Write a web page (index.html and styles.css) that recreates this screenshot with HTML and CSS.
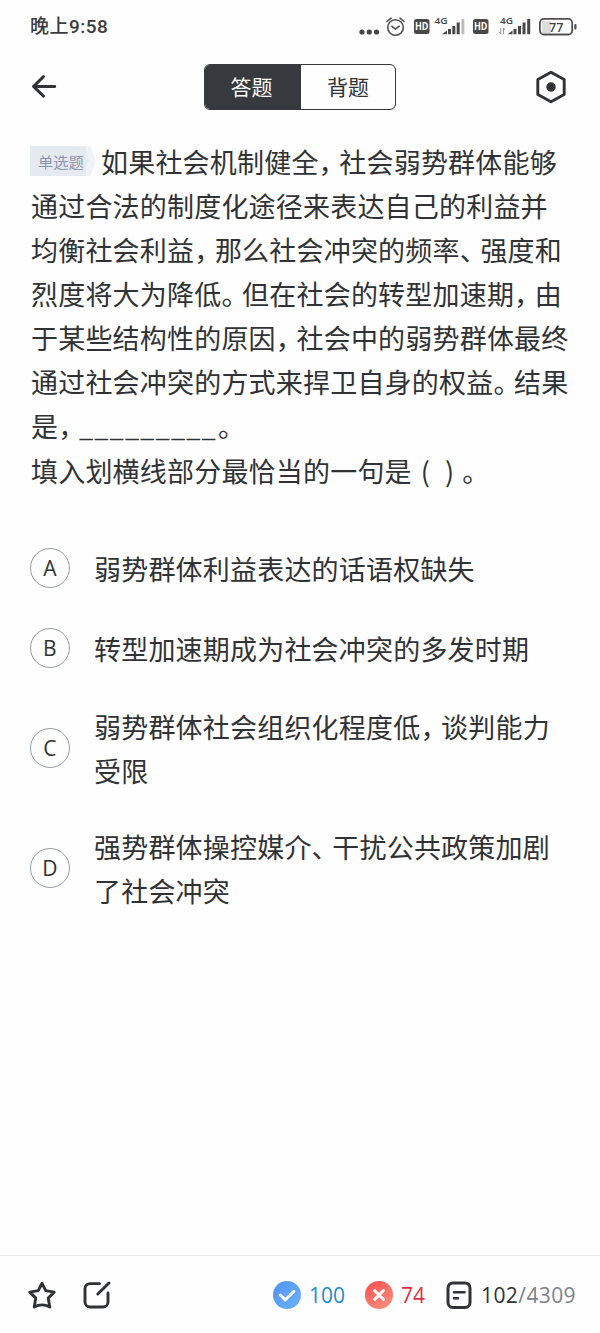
FILE: index.html
```html
<!DOCTYPE html>
<html lang="zh-CN">

<head>
    <meta charset="UTF-8">
    <meta name="viewport" content="width=device-width, initial-scale=1.0">
    <title>答题</title>
    <link rel="stylesheet" href="styles.css">
</head>

<body>
    <div class="status">
        <span class="time">晚上9:58</span>
        <svg class="status-icons" width="224" height="26" viewBox="356 14 224 26">
            <g fill="#454545">
                <circle cx="362" cy="32" r="2.6"/><circle cx="369.3" cy="32" r="2.6"/><circle cx="376.5" cy="32" r="2.6"/>
            </g>
            <g fill="none" stroke="#505050" stroke-width="1.6" stroke-linecap="round" stroke-linejoin="round">
                <circle cx="395.5" cy="27.5" r="7.8"/>
                <path d="M391.8 26.2l3.6 3 3.8-3M387 21.5l4-3.3M404 21.5l-4-3.3"/>
            </g>
            <rect x="414" y="19" width="15.5" height="15" rx="2.5" fill="#484848"/>
            <text class="hd" x="415" y="30.4" textLength="13.5" lengthAdjust="spacingAndGlyphs">HD</text>
            <text class="net" x="434.5" y="24.3" textLength="13" lengthAdjust="spacingAndGlyphs">4G</text>
            <g fill="#484848">
                <path d="M442 34.3l5-3.8v3.8zM448 29h3v5.3h-3zM452.3 26h3v8.3h-3zM456.7 22.5h3v11.8h-3z"/>
                <path fill="#bbb" d="M461.5 19h2.8v15.3h-2.8z"/>
            </g>
            <rect x="473" y="19" width="15.5" height="15" rx="2.5" fill="#484848"/>
            <text class="hd" x="474" y="30.4" textLength="13.5" lengthAdjust="spacingAndGlyphs">HD</text>
            <text class="net" x="500" y="24.3" textLength="13" lengthAdjust="spacingAndGlyphs">4G</text>
            <path d="M500.8 28v6l-1.6-2M503.5 34v-6l1.6 2" fill="none" stroke="#999" stroke-width="1"/>
            <path fill="#484848" d="M507.5 34.3l5-3.8v3.8zM513.5 29h3v5.3h-3zM518 26h3v8.3h-3zM522.5 22.5h3v11.8h-3zM527.2 19h3v15.3h-3z"/>
            <rect x="542" y="21" width="9" height="12" fill="#ddd"/>
            <rect x="539.9" y="18.9" width="32.3" height="15.6" rx="4" fill="none" stroke="#505050" stroke-width="1.8"/>
            <rect x="574.3" y="24" width="2.2" height="5.5" rx="1" fill="#505050"/>
            <text class="power" x="549" y="31.5" textLength="14.5">77</text>
        </svg>
    </div>

    <div class="nav">
        <svg width="26" height="26" viewBox="0 0 26 26" fill="none" stroke="#303235" stroke-width="2.9" stroke-linecap="round" stroke-linejoin="round">
            <path d="M23.8 12.5H2.5M12.5 2.6L2.5 12.5l10 9.6"/>
        </svg>
        <div class="tabs">
            <div class="tab active">答题</div>
            <div class="tab">背题</div>
        </div>
        <svg width="32" height="34" viewBox="0 0 32 34">
            <path d="M16 2.3l13.2 7.2v15L16 31.7 2.8 24.5v-15z" fill="none" stroke="#303235" stroke-width="2.9" stroke-linejoin="round"/>
            <circle cx="16" cy="17" r="4.7" fill="#303235"/>
        </svg>
    </div>

    <div class="question">
        <p><span class="tag">单选题</span>如果社会机制健全<i>，</i>社会弱势群体能够<br>通过合法的制度化途径来表达自己的利益并<br>均衡社会利益<i>，</i>那么社会冲突的频率<i>、</i>强度和<br>烈度将大为降低<i>。</i>但在社会的转型加速期<i>，</i>由<br>于某些结构性的原因<i>，</i>社会中的弱势群体最终<br>通过社会冲突的方式来捍卫自身的权益<i>。</i>结果<br>是<i>，</i><span class="blank">_________</span><i>。</i></p>
        <p class="ask">填入划横线部分最恰当的一句是<span class="paren">( &nbsp;)</span><i>。</i></p>
    </div>

    <div class="options">
        <div class="option"><span class="key">A</span><span>弱势群体利益表达的话语权缺失</span></div>
        <div class="option"><span class="key">B</span><span>转型加速期成为社会冲突的多发时期</span></div>
        <div class="option"><span class="key">C</span><span>弱势群体社会组织化程度低<i>，</i>谈判能力<br>受限</span></div>
        <div class="option"><span class="key">D</span><span>强势群体操控媒介<i>、</i>干扰公共政策加剧<br>了社会冲突</span></div>
    </div>

    <div class="footer">
        <svg class="star" width="28" height="28" viewBox="0 0 28 28" fill="none" stroke="#303235" stroke-width="2.9" stroke-linejoin="round">
            <path d="M14 2.2l3.7 7.4 8.5 1.5-6 6 1.6 8.9q-7.8-4.2-15.6 0L7.8 17.1l-6-6 8.5-1.5z"/>
        </svg>
        <svg class="edit" width="28" height="28" viewBox="0 0 28 28" fill="none" stroke="#303235" stroke-width="2.9" stroke-linecap="round">
            <path d="M16.5 2.6H7A5 5 0 0 0 2 7.6V21A5 5 0 0 0 7 26h13a5 5 0 0 0 5-5V12M14.8 13L26 2"/>
        </svg>
        <svg class="right" width="28" height="28" viewBox="0 0 28 28">
            <defs>
                <linearGradient id="blue" x1="0" y1="0" x2="1" y2="1"><stop stop-color="#4f93f0"/><stop offset="1" stop-color="#6db3fb"/></linearGradient>
                <linearGradient id="red" x1="0" y1="0" x2="0.6" y2="1"><stop stop-color="#f94a4e"/><stop offset="1" stop-color="#fc8b78"/></linearGradient>
            </defs>
            <circle cx="14" cy="14" r="14" fill="url(#blue)"/>
            <path d="M7.3 14l5 4.8 8.7-8.5" fill="none" stroke="#fff" stroke-width="3" stroke-linecap="round" stroke-linejoin="round"/>
        </svg>
        <span class="num blue">100</span>
        <svg class="wrong" width="28" height="28" viewBox="0 0 28 28">
            <circle cx="14" cy="14" r="14" fill="url(#red)"/>
            <path d="M9.5 9.5l9 9M18.5 9.5l-9 9" stroke="#fff" stroke-width="3" stroke-linecap="round"/>
        </svg>
        <span class="num red">74</span>
        <svg class="sheet" width="26" height="28" viewBox="0 0 26 28" fill="none" stroke="#303235" stroke-width="3" stroke-linecap="round">
            <rect x="2" y="1.9" width="22" height="24.5" rx="5"/>
            <path d="M8 11.3h10.5M8 17.3h4" stroke-width="2.6"/>
        </svg>
        <span class="num count">102<span class="total">/4309</span></span>
    </div>
</body>

</html>
```
FILE: styles.css
```css
* {
    box-sizing: border-box;
}
body {
    margin: 0;
    height: 1333px;
    display: flex;
    flex-direction: column;
    background: #fefefe;
    color: #303235;
    font-family: "Noto Sans CJK SC", sans-serif;
}
p {
    margin: 0;
}
svg {
    display: block;
    flex: none;
}
.status {
    display: flex;
    justify-content: space-between;
    align-items: center;
    height: 54px;
    padding: 0 20px 0 30px;
}
.time {
    font-family: Roboto, "Noto Sans CJK SC", sans-serif;
    font-size: 19px;
    font-weight: 500;
    letter-spacing: 0.5px;
    line-height: 24px;
    color: #3c3c3c;
}
.hd, .net, .power {
    font-family: "Open Sans", sans-serif;
    font-weight: 700;
}
.hd {
    font-size: 10.5px;
    fill: #fff;
}
.net {
    font-size: 9.5px;
    font-weight: 600;
    fill: #444;
}
.power {
    font-size: 12.5px;
    font-weight: 600;
    fill: #444;
}
.nav {
    display: flex;
    justify-content: space-between;
    align-items: center;
    height: 66px;
    padding: 0 33px 0 31px;
}
.tabs {
    display: flex;
    width: 192px;
    height: 46px;
    margin-left: 8px;
    border: 1.5px solid #36393e;
    border-radius: 6px;
    overflow: hidden;
}
.tab {
    flex: 1;
    text-align: center;
    font-size: 21px;
    line-height: 43px;
}
.active {
    flex: 0 0 96px;
    padding-right: 3px;
    background: #36393e;
    color: #fff;
}
.question {
    height: 409px;
    padding: 20px 0 0 31px;
}
.question, .options {
    font-size: 27px;
    line-height: 44px;
    letter-spacing: 0.2px;
    white-space: nowrap;
}
/* narrow punctuation */
i {
    font-style: normal;
    letter-spacing: -6.3px;
}
.ask {
    margin-top: 1px;
}
.tag {
    display: inline-block;
    width: 66px;
    height: 30px;
    margin: -9px 5px 0 -1px;
    padding-left: 8px;
    background:
        conic-gradient(from 225deg at 60px 50%, #e5eaf1 0 90deg, transparent 0),
        linear-gradient(90deg, #e5eaf1 0 56px, #eff3f7 56px);
    clip-path: polygon(0 0, 91% 0, 100% 50%, 91% 100%, 0 100%);
    color: #8b95ab;
    font-size: 15.3px;
    line-height: 30px;
    letter-spacing: 0;
    vertical-align: middle;
}
.blank {
    margin-left: 1px;
    font: 700 22px "Liberation Sans", sans-serif;
    letter-spacing: 3.1px;
    -webkit-text-stroke: 0.8px #303235;
}
.paren {
    margin-left: 9px;
    margin-right: 7px;
    letter-spacing: 1px;
}
.options {
    flex: 1;
}
.option {
    display: flex;
    align-items: center;
    gap: 24px;
    min-height: 80px;
    padding: 16px 0 16px 30px;
}
.key {
    width: 40px;
    height: 40px;
    margin-top: -2px;
    border: 1.5px solid #979ca6;
    border-radius: 50%;
    text-align: center;
    font-family: "Open Sans", sans-serif;
    font-size: 21px;
    line-height: 39px;
}
.footer {
    display: flex;
    align-items: center;
    height: 78px;
    padding: 0 0 0 28px;
    border-top: 1.5px solid #e9e9ea;
}
.edit {
    margin-left: 27px;
}
.right {
    margin-left: 162px;
}
.num {
    margin-left: 8px;
    font-family: "Open Sans", sans-serif;
    font-size: 21px;
}
.wrong {
    margin-left: 20px;
}
.sheet {
    margin-left: 21px;
}
.count {
    margin-left: 9px;
    letter-spacing: 0.4px;
}
.blue {
    color: #1e8bd2;
}
.red {
    color: #dc2f48;
}
.total {
    color: #7c818c;
}
```
